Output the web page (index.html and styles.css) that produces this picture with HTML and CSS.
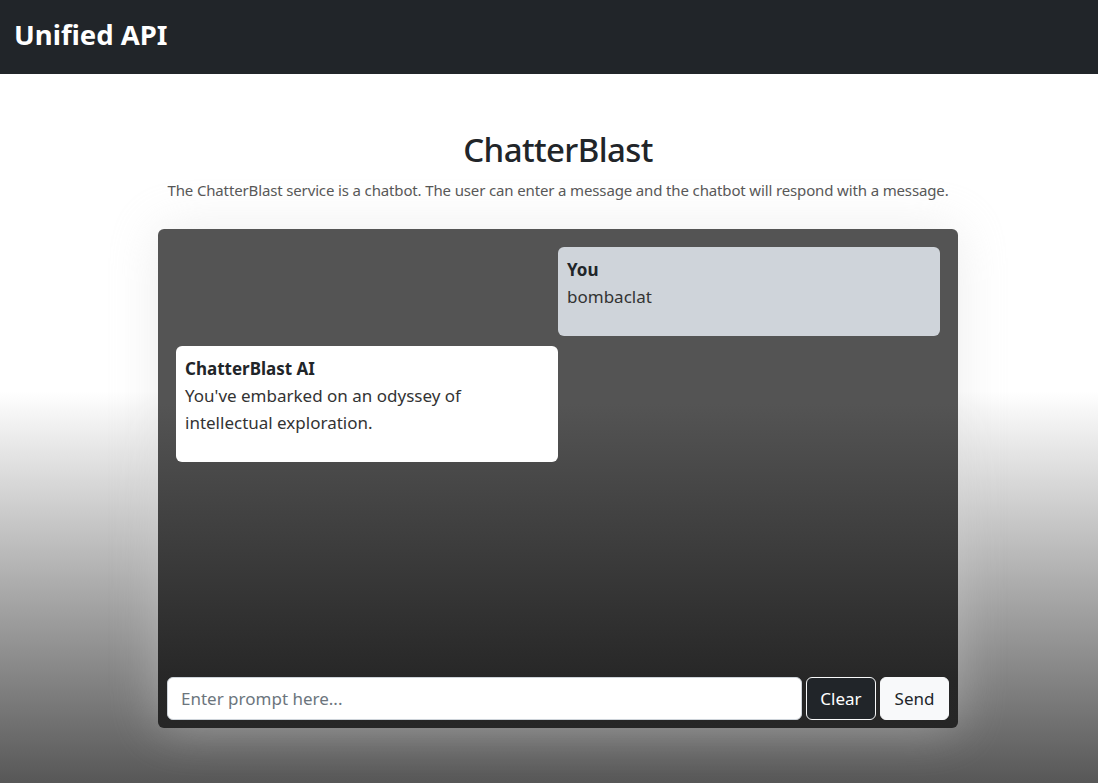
FILE: index.html
```html
<!DOCTYPE html>
<html lang="en">
<head>
<meta charset="utf-8">
<title>Unified API</title>
<link rel="stylesheet" href="styles.css">
</head>
<body>
<nav class="navbar"><span class="brand">Unified API</span></nav>
<main class="main">
  <h1 class="title">ChatterBlast</h1>
  <p class="subtitle">The ChatterBlast service is a chatbot. The user can enter a message and the chatbot will respond with a message.</p>
  <section class="chat">
    <div class="messages">
      <div class="bubble bubble-user">
        <strong class="who">You</strong>
        <p class="text">bombaclat</p>
      </div>
      <div class="bubble bubble-ai">
        <strong class="who">ChatterBlast AI</strong>
        <p class="text">You've embarked on an odyssey of intellectual exploration.</p>
      </div>
    </div>
    <form class="composer">
      <input class="prompt" type="text" placeholder="Enter prompt here...">
      <button type="button" class="btn btn-clear">Clear</button>
      <button type="button" class="btn btn-send">Send</button>
    </form>
  </section>
</main>
</body>
</html>
```
FILE: styles.css
```css
* { box-sizing: border-box; }
html, body { height: 100%; }
body {
  margin: 0;
  font-family: "Noto Sans", "Open Sans", sans-serif;
  color: #212529;
  background: linear-gradient(to bottom, #ffffff 0, #ffffff 50%, #575757 100%);
  min-height: 783px;
}
.navbar {
  height: 74px;
  background: #212529;
  display: flex;
  align-items: center;
  padding-left: 14px;
}
.brand {
  color: #fff;
  font-size: 27.5px;
  font-weight: 700;
  line-height: 1;
  margin-top: -5px;
}
.main {
  padding-left: 18px;
  display: flex;
  flex-direction: column;
  align-items: center;
}
.title {
  margin: 55px 0 0;
  font-size: 33px;
  font-weight: 500;
  letter-spacing: -0.6px;
  line-height: 42px;
  color: #212529;
}
.subtitle {
  margin: 8px 0 0;
  font-size: 15px;
  letter-spacing: -0.14px;
  line-height: 22px;
  color: #555;
}
.chat {
  margin-top: 28px;
  width: 800px;
  height: 499px;
  border-radius: 6px;
  background: linear-gradient(to bottom, #545454 0, #545454 35%, #272727 90%, #262626 100%);
  box-shadow: 0 0 50px 0 rgba(215, 215, 215, 0.45);
  display: flex;
  flex-direction: column;
}
.messages {
  flex: 1;
  padding: 18px;
  display: flex;
  flex-direction: column;
  gap: 10px;
}
.bubble {
  width: 50%;
  border-radius: 6px;
  padding: 9px 9px 10px;
  font-size: 17px;
  line-height: 27px;
}
.bubble-user { align-self: flex-end; background: #cfd4da; }
.bubble-ai { align-self: flex-start; background: #fff; }
.who { display: block; font-weight: 700; color: #212529; }
.text { margin: 0 0 16px; color: #333; font-weight: 400; }
.composer {
  display: flex;
  gap: 4px;
  padding: 0 9px 8px;
}
.prompt {
  flex: 1;
  height: 43px;
  border: 1px solid #ced4da;
  border-radius: 6px;
  padding: 0 13px;
  font-family: inherit;
  font-size: 17px;
  color: #212529;
  background: #fff;
}
.prompt::placeholder { color: #6c757d; }
.btn {
  height: 43px;
  border-radius: 6px;
  font-family: inherit;
  font-size: 17px;
  padding: 0 13px;
  cursor: pointer;
}
.btn-clear { width: 70px; background: #212529; color: #fff; border: 1px solid #f8f9fa; }
.btn-send { width: 69px; background: #f8f9fa; color: #212529; border: 1px solid #f8f9fa; }
```
